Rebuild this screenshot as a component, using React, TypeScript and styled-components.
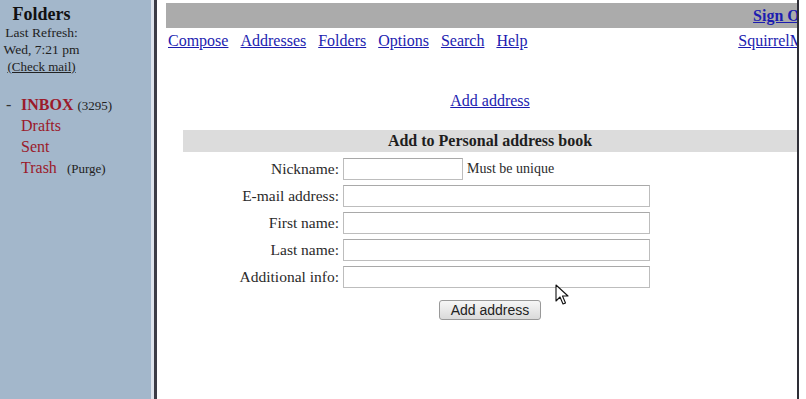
import React from "react";
import styled, { createGlobalStyle } from "styled-components";

const Global = createGlobalStyle`
  html, body { margin: 0; padding: 0; background: #fff; overflow: hidden; }
  body { font-family: "Liberation Serif", "Times New Roman", serif; width: 806px; height: 399px; }
`;

const Page = styled.div`
  display: flex;
  width: 806px;
  height: 399px;
  background: #fff;
`;

const LeftPanel = styled.div`
  width: 151px;
  flex-shrink: 0;
  background: #a3b7cb;
  padding-top: 4px;
  box-sizing: border-box;
`;

const FolderHead = styled.div`
  display: inline-flex;
  flex-direction: column;
  align-items: center;
  margin-left: 4px;
  width: 75px;
`;

const Title = styled.div`
  font-size: 18px;
  font-weight: bold;
  line-height: 20px;
  color: #111;
`;

const Small = styled.div`
  font-size: 13.5px;
  line-height: 17px;
  color: #222;
  white-space: nowrap;
`;

const BlackLink = styled.a`
  color: #222;
  text-decoration: underline;
  font-size: 13px;
`;

const FolderList = styled.div`
  margin-top: 19px;
  display: flex;
  flex-direction: column;
`;

const FolderRow = styled.div`
  display: flex;
  align-items: baseline;
  height: 21px;
  line-height: 21px;
  padding-left: 6px;
`;

const Dash = styled.span`
  width: 15px;
  font-size: 16px;
  color: #333;
`;

const FolderName = styled.span<{ $bold?: boolean }>`
  font-size: 16px;
  color: #9b1a2a;
  font-weight: ${(p) => (p.$bold ? "bold" : "normal")};
`;

const Count = styled.span<{ $gap: number }>`
  font-size: 13px;
  color: #222;
  margin-left: ${(p) => p.$gap}px;
`;

const Divider = styled.div`
  width: 3px;
  flex-shrink: 0;
  border-left: 3px solid #dde3ec;
  background: #3c3c46;
`;

const RightFrame = styled.div`
  width: 640px;
  flex-shrink: 0;
  overflow: hidden;
  border-right: 2px solid #2e2e36;
  position: relative;
`;

const Inner = styled.div`
  width: 648px;
  margin-left: 9px;
  padding-top: 3px;
`;

const TopBar = styled.div`
  height: 25px;
  background: #ababab;
  display: flex;
  justify-content: flex-end;
  align-items: center;
`;

const Link = styled.a<{ $bold?: boolean }>`
  color: #1c1cb0;
  text-decoration: underline;
  font-size: 16px;
  font-weight: ${(p) => (p.$bold ? "bold" : "normal")};
  white-space: nowrap;
`;

const NavRow = styled.div`
  display: flex;
  justify-content: space-between;
  margin-top: 4px;
  margin-right: -6px;
  padding-left: 2px;
  line-height: 18px;
`;

const NavGroup = styled.div`
  display: flex;
  gap: 12px;
`;

const Center = styled.div`
  text-align: center;
  margin-top: 42px;
  line-height: 18px;
`;

const HeaderBar = styled.div`
  width: 614px;
  margin: 20px auto 0;
  height: 22px;
  background: #dcdcdc;
  text-align: center;
  font-weight: bold;
  font-size: 16px;
  line-height: 22px;
  color: #1e1e1e;
`;

const Form = styled.div`
  display: grid;
  grid-template-columns: 173px auto;
  column-gap: 4px;
  row-gap: 5px;
  margin-top: 6px;
  align-items: center;
`;

const Label = styled.label`
  text-align: right;
  font-size: 15.5px;
  color: #2a2a2a;
  white-space: nowrap;
`;

const FieldCell = styled.div`
  display: flex;
  align-items: center;
  gap: 4px;
`;

const Input = styled.input<{ $w: number }>`
  width: ${(p) => p.$w}px;
  height: 22px;
  box-sizing: border-box;
  border: 1px solid #bdbdbd;
  border-top-color: #a9a9a9;
  background: #fff;
  margin: 0;
  padding: 0 2px;
`;

const Hint = styled.span`
  font-size: 14px;
  color: #2a2a2a;
`;

const ButtonRow = styled.div`
  display: flex;
  justify-content: center;
  margin-top: 12px;
`;

const Button = styled.button`
  width: 102px;
  height: 20px;
  box-sizing: border-box;
  border: 1px solid #999;
  border-radius: 3px;
  background: linear-gradient(#f6f6f6, #dadada);
  font-family: "Liberation Sans", Arial, sans-serif;
  font-size: 14px;
  color: #222;
  padding: 0;
  line-height: 18px;
`;

const Cursor = styled.svg`
  position: absolute;
  left: 398px;
  top: 284px;
`;

export default function App() {
  const fields = [
    { label: "Nickname:", w: 120, hint: "Must be unique" },
    { label: "E-mail address:", w: 307 },
    { label: "First name:", w: 307 },
    { label: "Last name:", w: 307 },
    { label: "Additional info:", w: 307 },
  ];
  return (
    <>
      <Global />
      <Page>
        <LeftPanel>
          <FolderHead>
            <Title>Folders</Title>
            <Small>Last Refresh:</Small>
            <Small>Wed, 7:21 pm</Small>
            <Small>
              <BlackLink href="#">(Check mail)</BlackLink>
            </Small>
          </FolderHead>
          <FolderList>
            <FolderRow>
              <Dash>-</Dash>
              <FolderName $bold>INBOX</FolderName>
              <Count $gap={4}>(3295)</Count>
            </FolderRow>
            <FolderRow>
              <Dash />
              <FolderName>Drafts</FolderName>
            </FolderRow>
            <FolderRow>
              <Dash />
              <FolderName>Sent</FolderName>
            </FolderRow>
            <FolderRow>
              <Dash />
              <FolderName>Trash</FolderName>
              <Count $gap={10}>(Purge)</Count>
            </FolderRow>
          </FolderList>
        </LeftPanel>
        <Divider />
        <RightFrame>
          <Inner>
            <TopBar>
              <Link $bold href="#">Sign Out</Link>
            </TopBar>
            <NavRow>
              <NavGroup>
                {["Compose", "Addresses", "Folders", "Options", "Search", "Help"].map((n) => (
                  <Link key={n} href="#">{n}</Link>
                ))}
              </NavGroup>
              <Link href="#">SquirrelMail</Link>
            </NavRow>
            <Center>
              <Link href="#">Add address</Link>
            </Center>
            <HeaderBar>Add to Personal address book</HeaderBar>
            <Form>
              {fields.map((f) => (
                <React.Fragment key={f.label}>
                  <Label>{f.label}</Label>
                  <FieldCell>
                    <Input $w={f.w} />
                    {f.hint && <Hint>{f.hint}</Hint>}
                  </FieldCell>
                </React.Fragment>
              ))}
            </Form>
            <ButtonRow>
              <Button>Add address</Button>
            </ButtonRow>
          </Inner>
          <Cursor width="14" height="22" viewBox="0 0 14 22">
            <path d="M1 1 L1 17 L5 13 L8 20 L10.5 19 L7.5 12 L13 12 Z" fill="#fff" stroke="#111" strokeWidth="1.1" strokeLinejoin="round" />
          </Cursor>
        </RightFrame>
      </Page>
    </>
  );
}
